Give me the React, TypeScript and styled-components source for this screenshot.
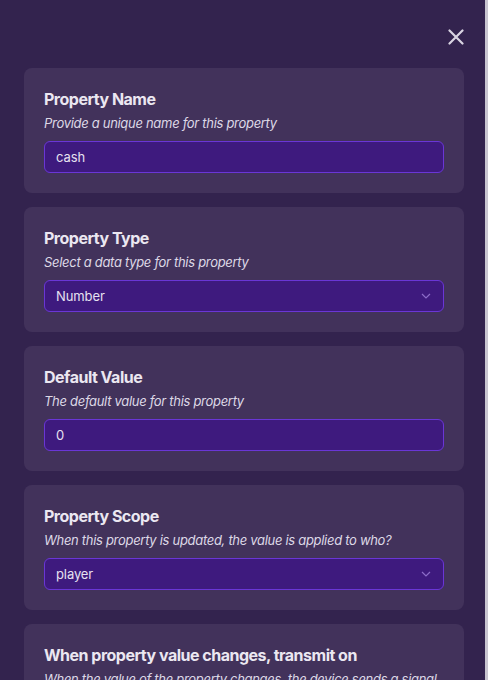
import styled, { createGlobalStyle } from "styled-components"

const GlobalStyle = createGlobalStyle`
    * {
        box-sizing: border-box;
    }
    html, body {
        margin: 0;
        padding: 0;
        background: #33234e;
        font-family: Inter, "Noto Sans", sans-serif;
    }
`

interface FieldInterface {
    title: string,
    description: string,
    value?: string,
    select?: boolean,
}

const fields: FieldInterface[] = [
    { title: "Property Name", description: "Provide a unique name for this property", value: "cash" },
    { title: "Property Type", description: "Select a data type for this property", value: "Number", select: true },
    { title: "Default Value", description: "The default value for this property", value: "0" },
    { title: "Property Scope", description: "When this property is updated, the value is applied to who?", value: "player", select: true },
    { title: "When property value changes, transmit on", description: "When the value of the property changes, the device sends a signal on this channel" },
]

export default function App() {
    return (
        <>
            <GlobalStyle />
            <Page>
                <Modal>
                    <Header>
                        <CloseButton aria-label="Close">
                            <svg width="16" height="16" viewBox="0 0 16 16">
                                <path d="M1.5 1.5 L14.5 14.5 M14.5 1.5 L1.5 14.5" stroke="#d9d4e2" strokeWidth="2.2" strokeLinecap="round" />
                            </svg>
                        </CloseButton>
                    </Header>
                    <Cards>
                        {fields.map(field => (
                            <Card key={field.title}>
                                <Title>{field.title}</Title>
                                <Description>{field.description}</Description>
                                {field.value !== undefined && (
                                    <Input>
                                        <span>{field.value}</span>
                                        {field.select && (
                                            <svg width="10" height="6" viewBox="0 0 10 6">
                                                <path d="M1 1 L5 5 L9 1" stroke="#8c6cc8" strokeWidth="1.2" fill="none" />
                                            </svg>
                                        )}
                                    </Input>
                                )}
                            </Card>
                        ))}
                    </Cards>
                </Modal>
                <ScrollTrack />
            </Page>
        </>
    )
}

const Page = styled.div`
    position: relative;
    height: 680px;
    overflow: hidden;
`

const Modal = styled.div`
    height: 680px;
    overflow-y: auto;
    scrollbar-width: none;
    padding: 0 24px 24px 24px;
    background: #33234e;
`

// drawn over the right edge, the modal's scroll bar
const ScrollTrack = styled.div`
    position: absolute;
    top: 0;
    right: 0;
    width: 3px;
    height: 100%;
    background: #c9c5d0;
`

const Header = styled.div`
    height: 68px;
    display: flex;
    justify-content: flex-end;
    align-items: flex-start;
    padding-top: 29px;
`

const CloseButton = styled.button`
    width: 16px;
    height: 16px;
    padding: 0;
    border: none;
    background: none;
    display: flex;
    cursor: pointer;
`

const Cards = styled.div`
    display: flex;
    flex-direction: column;
    gap: 14px;
`

const Card = styled.div`
    background: #42325b;
    border-radius: 8px;
    padding: 20px;
    display: flex;
    flex-direction: column;
`

const Title = styled.div`
    font-size: 16px;
    line-height: 22px;
    font-weight: 700;
    color: #ebe7f1;
    margin-bottom: 4px;
    letter-spacing: -0.5px;
`

const Description = styled.div`
    font-size: 13px;
    line-height: 18px;
    font-style: italic;
    color: #ddd8e6;
    letter-spacing: -0.3px;
`

const Input = styled.div`
    margin-top: 9px;
    height: 32px;
    border: 1px solid #6a36d6;
    border-radius: 6px;
    background: #3e1a7e;
    padding: 0 12px 0 11px;
    display: flex;
    align-items: center;
    justify-content: space-between;
    font-size: 13px;
    letter-spacing: -0.1px;
    color: #e6e1f0;
`
